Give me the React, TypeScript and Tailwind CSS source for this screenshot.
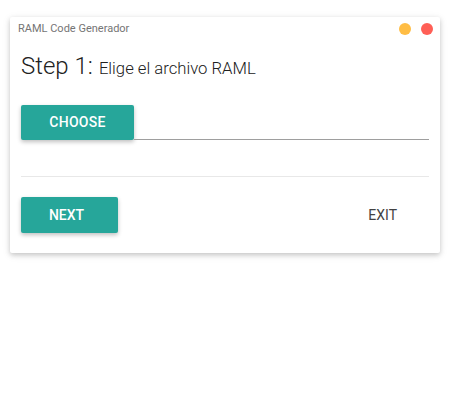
function App() {
  return (
    <div className="h-[400px] w-[450px] bg-white pt-[17px] pl-[10px] font-['Roboto',sans-serif]">
      <div className="w-[430px] rounded-[2px] bg-white shadow-[0_2px_5px_rgba(0,0,0,0.18),0_2px_10px_rgba(0,0,0,0.08)]">
        <div className="flex items-center justify-between pl-[8px] pr-[7px] pt-[5px]">
          <span className="text-[11px] leading-[14px] text-[#757575]">RAML Code Generador</span>
          <div className="flex items-center gap-[10px]">
            <span className="h-[12px] w-[12px] rounded-full bg-[#ffbd44]" />
            <span className="h-[12px] w-[12px] rounded-full bg-[#ff5f56]" />
          </div>
        </div>
        <div className="px-[11px]">
          <h1 className="mt-[13px] flex items-baseline gap-[6px] font-light text-[#212121]">
            <span className="text-[24px] leading-[34px]">Step 1:</span>
            <span className="text-[16.7px]">Elige el archivo RAML</span>
          </h1>
          <div className="mt-[22px] flex items-end">
            <button className="h-[35px] w-[113px] rounded-[2px] bg-[#26a69a] text-[14px] font-medium uppercase tracking-[0.3px] text-white shadow-[0_2px_4px_rgba(0,0,0,0.25)]">
              Choose
            </button>
            <div className="flex-1 border-b border-[#9e9e9e]" />
          </div>
          <div className="mt-[36px] border-t border-[#e8e8e8]" />
          <div className="flex items-center justify-between pt-[20px] pb-[20px] pr-[32px]">
            <button className="h-[36px] w-[97px] rounded-[2px] bg-[#26a69a] pr-[6px] text-[14px] font-medium uppercase text-white shadow-[0_2px_4px_rgba(0,0,0,0.25)]">
              Next
            </button>
            <span className="text-[14px] uppercase text-[#424242]">Exit</span>
          </div>
        </div>
      </div>
    </div>
  );
}

export default App;
